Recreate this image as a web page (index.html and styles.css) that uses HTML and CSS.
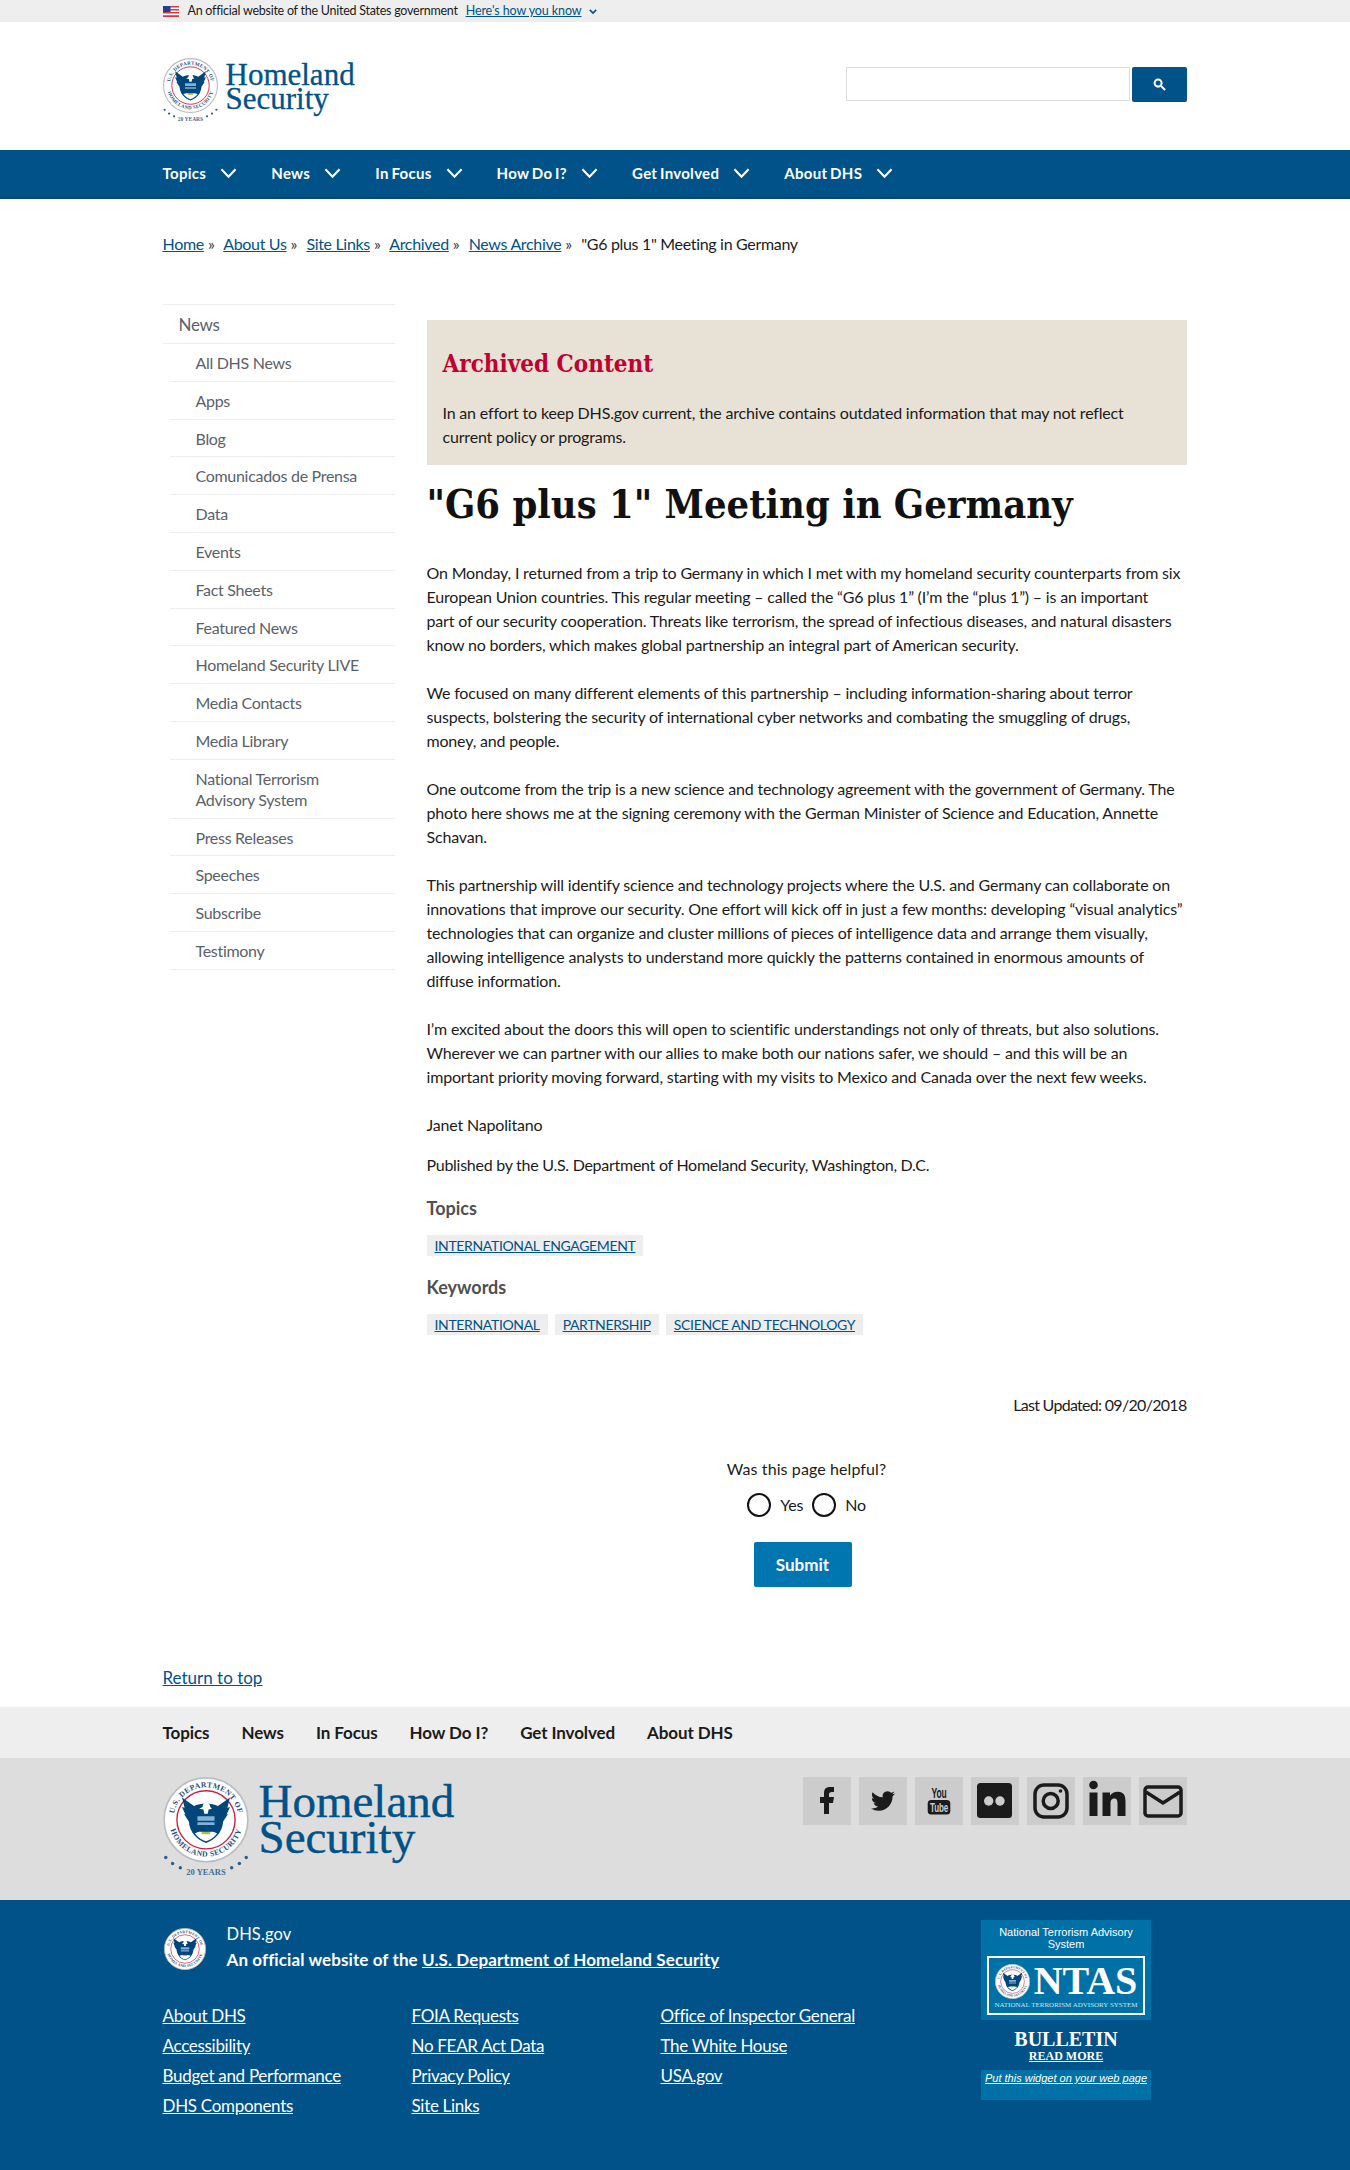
FILE: index.html
```html
<!DOCTYPE html>
<html lang="en">
<head>
<meta charset="UTF-8" />
<meta name="viewport" content="width=device-width, initial-scale=1" />
<title>"G6 plus 1" Meeting in Germany | Homeland Security</title>
<link rel="stylesheet" href="styles.css">
</head>
<body>

<!-- Shared drawings -->
<svg class="defs" width="0" height="0" aria-hidden="true">
  <defs>
    <path id="ring-top" d="M12 50a38 38 0 0 1 76 0" />
    <path id="ring-bottom" d="M7 50a43 43 0 0 0 86 0" />
    <g id="seal-art">
      <circle cx="50" cy="50" r="49" fill="#fff" stroke="#b9bcc2" stroke-width="2" />
      <circle cx="50" cy="50" r="34" fill="#fff" stroke="#c8203f" stroke-width="1.6" />
      <text class="seal-text"><textPath href="#ring-top" startOffset="50%" text-anchor="middle">U.S. DEPARTMENT OF</textPath></text>
      <text class="seal-text"><textPath href="#ring-bottom" startOffset="50%" text-anchor="middle">HOMELAND SECURITY</textPath></text>
      <path fill="#00467a" d="M36 34c7-4 21-4 28 0l14-10-3 12 3-1-4 9 2-1-6 9c-1 13-9 21-20 25-11-4-19-12-20-25l-6-9 2 1-4-9 3 1-3-12z" />
      <path fill="#fff" d="M50 30c3 0 5 2 5 5l2 2-4 1-1 5h-4l-1-5-5-1 4-2c0-3 1-5 4-5z" />
      <path fill="#7fb2d6" d="M40 46h20v5H40zM40 53h20v3H40z" />
      <path fill="#fff" d="M37 66c4-3 9-2 13-1 4-1 9-2 13 1-4 5-9 8-13 9-4-1-9-4-13-9z" />
      <path fill="#a9c23f" d="M45 64h10v3H45z" />
    </g>
    <symbol id="seal" viewBox="0 0 100 100">
      <use href="#seal-art" />
    </symbol>
    <symbol id="seal-years" viewBox="0 0 100 118">
      <use href="#seal-art" />
      <g fill="#2b5f8a">
        <circle cx="3" cy="94" r="2" /><circle cx="11" cy="101" r="2" /><circle cx="20" cy="106" r="2" />
        <circle cx="97" cy="94" r="2" /><circle cx="89" cy="101" r="2" /><circle cx="80" cy="106" r="2" />
      </g>
      <text class="seal-years" x="50" y="114" text-anchor="middle">20 YEARS</text>
    </symbol>
  </defs>
</svg>

<div class="gov-banner">
  <div class="wrap gov-inner">
    <svg class="flag" viewBox="0 0 16 11" width="16" height="11" aria-hidden="true">
      <rect width="16" height="11" fill="#fff" />
      <path fill="#d5374a" d="M0 0h16v1.5H0zM0 3h16v1.5H0zM0 6h16v1.5H0zM0 9.2h16V11H0z" />
      <rect width="7.5" height="6" fill="#2b3b8f" />
    </svg>
    <span>An official website of the United States government</span>
    <a href="#">Here's how you know</a>
    <svg class="mini-chev" viewBox="0 0 10 6" width="8" height="5" aria-hidden="true"><path d="M1 1l4 4 4-4" /></svg>
  </div>
</div>

<header class="site-head">
  <div class="wrap head-inner">
    <a class="logo" href="#">
      <svg class="logo-seal" viewBox="0 0 100 118" aria-hidden="true"><use href="#seal-years" /></svg>
      <span class="logo-word">Homeland<br>Security</span>
    </a>
    <form class="search">
      <input type="text" aria-label="Search" />
      <button type="button" aria-label="Search">
        <svg viewBox="0 0 14 14" width="13" height="13"><circle cx="5.5" cy="5.5" r="3.8" /><path d="M8.5 8.5L13 13" /></svg>
      </button>
    </form>
  </div>
</header>

<nav class="main-nav">
  <ul class="wrap nav-list">
    <li>Topics<svg viewBox="0 0 18 12"><path d="M1.5 2L9 10l7.5-8" /></svg></li>
    <li>News<svg viewBox="0 0 18 12"><path d="M1.5 2L9 10l7.5-8" /></svg></li>
    <li>In Focus<svg viewBox="0 0 18 12"><path d="M1.5 2L9 10l7.5-8" /></svg></li>
    <li>How Do I?<svg viewBox="0 0 18 12"><path d="M1.5 2L9 10l7.5-8" /></svg></li>
    <li>Get Involved<svg viewBox="0 0 18 12"><path d="M1.5 2L9 10l7.5-8" /></svg></li>
    <li>About DHS<svg viewBox="0 0 18 12"><path d="M1.5 2L9 10l7.5-8" /></svg></li>
  </ul>
</nav>

<div class="wrap crumbs">
  <a href="#">Home</a><span class="sep">»</span>
  <a href="#">About Us</a><span class="sep">»</span>
  <a href="#">Site Links</a><span class="sep">»</span>
  <a href="#">Archived</a><span class="sep">»</span>
  <a href="#">News Archive</a><span class="sep">»</span>
  <span class="crumb-here">"G6 plus 1" Meeting in Germany</span>
</div>

<div class="wrap page">
  <aside>
    <ul class="side-nav">
      <li class="side-top">News</li>
      <li>All DHS News</li>
      <li>Apps</li>
      <li>Blog</li>
      <li>Comunicados de Prensa</li>
      <li>Data</li>
      <li>Events</li>
      <li>Fact Sheets</li>
      <li>Featured News</li>
      <li>Homeland Security LIVE</li>
      <li>Media Contacts</li>
      <li>Media Library</li>
      <li>National Terrorism<br>Advisory System</li>
      <li>Press Releases</li>
      <li>Speeches</li>
      <li>Subscribe</li>
      <li>Testimony</li>
    </ul>
  </aside>

  <main>
    <section class="archived">
      <h2>Archived Content</h2>
      <p>In an effort to keep DHS.gov current, the archive contains outdated information that may not reflect<br>current policy or programs.</p>
    </section>

    <h1>"G6 plus 1" Meeting in Germany</h1>

    <div class="article">
      <p>On Monday, I returned from a trip to Germany in which I met with my homeland security counterparts from six<br>European Union countries. This regular meeting – called the “G6 plus 1” (I’m the “plus 1”) – is an important<br>part of our security cooperation. Threats like terrorism, the spread of infectious diseases, and natural disasters<br>know no borders, which makes global partnership an integral part of American security.</p>
      <p>We focused on many different elements of this partnership – including information-sharing about terror<br>suspects, bolstering the security of international cyber networks and combating the smuggling of drugs,<br>money, and people.</p>
      <p>One outcome from the trip is a new science and technology agreement with the government of Germany. The<br>photo here shows me at the signing ceremony with the German Minister of Science and Education, Annette<br>Schavan.</p>
      <p>This partnership will identify science and technology projects where the U.S. and Germany can collaborate on<br>innovations that improve our security. One effort will kick off in just a few months: developing “visual analytics”<br>technologies that can organize and cluster millions of pieces of intelligence data and arrange them visually,<br>allowing intelligence analysts to understand more quickly the patterns contained in enormous amounts of<br>diffuse information.</p>
      <p>I’m excited about the doors this will open to scientific understandings not only of threats, but also solutions.<br>Wherever we can partner with our allies to make both our nations safer, we should – and this will be an<br>important priority moving forward, starting with my visits to Mexico and Canada over the next few weeks.</p>
      <p>Janet Napolitano</p>
    </div>

    <p class="published">Published by the U.S. Department of Homeland Security, Washington, D.C.</p>

    <h3 class="tag-head">Topics</h3>
    <div class="tags"><a href="#">INTERNATIONAL ENGAGEMENT</a></div>
    <h3 class="tag-head">Keywords</h3>
    <div class="tags">
      <a href="#">INTERNATIONAL</a>
      <a href="#">PARTNERSHIP</a>
      <a href="#">SCIENCE AND TECHNOLOGY</a>
    </div>

    <p class="updated">Last Updated: 09/20/2018</p>

    <form class="helpful">
      <p>Was this page helpful?</p>
      <div class="radios">
        <input type="radio" name="helpful" id="yes" /><label for="yes">Yes</label>
        <input type="radio" name="helpful" id="no" /><label for="no">No</label>
      </div>
      <button type="button">Submit</button>
    </form>
  </main>
</div>

<div class="wrap to-top"><a href="#">Return to top</a></div>

<div class="foot-nav">
  <ul class="wrap">
    <li>Topics</li>
    <li>News</li>
    <li>In Focus</li>
    <li>How Do I?</li>
    <li>Get Involved</li>
    <li>About DHS</li>
  </ul>
</div>

<div class="foot-mid">
  <div class="wrap foot-mid-inner">
    <a class="logo logo-big" href="#">
      <svg class="logo-seal" viewBox="0 0 100 118" aria-hidden="true"><use href="#seal-years" /></svg>
      <span class="logo-word">Homeland<br>Security</span>
    </a>
    <div class="social">
      <a href="#" aria-label="Facebook"><svg viewBox="0 0 48 48"><path d="M21 37V26h-4v-6h4v-4c0-4 2-6 6-6h4v5h-2c-2 0-3 1-3 2v3h5l-1 6h-4v11z" /></svg></a>
      <a href="#" aria-label="Twitter"><svg viewBox="-12 -12 48 48"><path d="M23.953 4.57a10 10 0 01-2.825.775 4.958 4.958 0 002.163-2.723c-.951.555-2.005.959-3.127 1.184a4.92 4.92 0 00-8.384 4.482C7.69 8.095 4.067 6.13 1.64 3.162a4.822 4.822 0 00-.666 2.475c0 1.71.87 3.213 2.188 4.096a4.904 4.904 0 01-2.228-.616v.06a4.923 4.923 0 003.946 4.827 4.996 4.996 0 01-2.212.085 4.936 4.936 0 004.604 3.417 9.867 9.867 0 01-6.102 2.105c-.39 0-.779-.023-1.17-.067a13.995 13.995 0 007.557 2.209c9.053 0 13.998-7.496 13.998-13.985 0-.21 0-.42-.015-.63A9.935 9.935 0 0024 4.59z" /></svg></a>
      <a href="#" aria-label="YouTube"><svg viewBox="0 0 48 48">
        <text class="yt-you" x="24" y="21" text-anchor="middle" textLength="15" lengthAdjust="spacingAndGlyphs">You</text>
        <rect x="12.700" y="23" width="22.600" height="14.500" rx="3.500" />
        <text class="yt-tube" x="24" y="34.500" text-anchor="middle" textLength="18" lengthAdjust="spacingAndGlyphs">Tube</text>
      </svg></a>
      <a href="#" aria-label="Flickr"><svg viewBox="0 0 48 48"><rect x="6" y="6" width="35" height="35" rx="3.500" /><circle cx="17.700" cy="24" r="4.700" class="cut" /><circle cx="29" cy="24" r="4.700" class="cut" /></svg></a>
      <a href="#" aria-label="Instagram"><svg viewBox="0 0 48 48" class="line"><rect x="8" y="8" width="32" height="32" rx="9" /><circle cx="23.700" cy="24" r="7.500" /><circle cx="33.500" cy="14" r="1.800" class="dot" /></svg></a>
      <a href="#" aria-label="LinkedIn"><svg viewBox="0 0 48 48"><circle cx="10.500" cy="8" r="4.300" /><rect x="6.500" y="15.500" width="8" height="23.500" /><path d="M19.500 15.500h7.500v3.300c1.500-2.600 4.500-4 7.700-4 6.500 0 7.800 4.300 7.800 10V39h-8V26.500c0-3-.5-5-3-5-3.400 0-4 2.400-4 5.200V39h-8z" /></svg></a>
      <a href="#" aria-label="Email"><svg viewBox="0 0 48 48" class="line"><rect x="6" y="10" width="36" height="29" rx="3" /><path d="M7 15l17 11 17-11" /></svg></a>
    </div>
  </div>
</div>

<footer class="foot-blue">
  <div class="wrap foot-blue-inner">
    <div class="foot-left">
      <div class="identity">
        <svg class="id-seal" viewBox="0 0 100 100" aria-hidden="true"><use href="#seal" /></svg>
        <div>
          <div class="id-name">DHS.gov</div>
          <div class="id-line">An official website of the <a href="#">U.S. Department of Homeland Security</a></div>
        </div>
      </div>
      <div class="foot-links">
        <ul>
          <li><a href="#">About DHS</a></li>
          <li><a href="#">Accessibility</a></li>
          <li><a href="#">Budget and Performance</a></li>
          <li><a href="#">DHS Components</a></li>
        </ul>
        <ul>
          <li><a href="#">FOIA Requests</a></li>
          <li><a href="#">No FEAR Act Data</a></li>
          <li><a href="#">Privacy Policy</a></li>
          <li><a href="#">Site Links</a></li>
        </ul>
        <ul>
          <li><a href="#">Office of Inspector General</a></li>
          <li><a href="#">The White House</a></li>
          <li><a href="#">USA.gov</a></li>
        </ul>
      </div>
    </div>

    <div class="ntas">
      <div class="ntas-top">
        <div class="ntas-title">National Terrorism Advisory<br>System</div>
        <div class="ntas-box">
          <div class="ntas-row">
            <svg viewBox="0 0 100 100" aria-hidden="true"><use href="#seal" /></svg>
            <span>NTAS</span>
          </div>
          <div class="ntas-sub">NATIONAL TERRORISM ADVISORY SYSTEM</div>
        </div>
      </div>
      <div class="ntas-bulletin">BULLETIN</div>
      <a class="ntas-more" href="#">READ MORE</a>
      <div class="ntas-widget"><a href="#">Put this widget on your web page</a></div>
    </div>
  </div>
</footer>

</body>
</html>
```

FILE: styles.css
```css
* { box-sizing: border-box; }
html, body { margin: 0; padding: 0; }
body {
  display: flex;
  flex-direction: column;
  min-height: 100vh;
  font-family: Lato, "Noto Sans", sans-serif;
  font-size: 16px;
  line-height: 24px;
  letter-spacing: -.22px;
  color: #1b1b1b;
  background: #fff;
}
a { color: #005288; }
ul { list-style: none; margin: 0; padding: 0; }
.defs { position: absolute; }
.wrap { width: 1024.500px; margin-left: 162.500px; }

.seal-text {
  font-family: "Liberation Serif", serif;
  font-size: 9px;
  font-weight: bold;
  letter-spacing: .5px;
  fill: #1f4f7c;
}
.seal-years {
  font-family: "Liberation Serif", serif;
  font-size: 10px;
  font-weight: bold;
  letter-spacing: 0;
  fill: #3f7098;
}

/* Gov banner */
.gov-banner {
  height: 22px;
  background: #eee;
  font-size: 12.500px;
  line-height: 22px;
  letter-spacing: -.25px;
}
.gov-inner { display: flex; align-items: center; }
.flag { margin-right: 9px; }
.gov-inner a { margin-left: 8px; letter-spacing: -.1px; }
.mini-chev { margin-left: 7px; fill: none; stroke: #005288; stroke-width: 2; }

/* Header */
.site-head { height: 128px; }
.head-inner {
  display: flex;
  justify-content: space-between;
  height: 100%;
  padding-top: 36px;
}
.logo {
  display: flex;
  align-items: flex-start;
  text-decoration: none;
}
.logo-seal { width: 55px; height: 65px; }
.logo-word {
  font-family: "Liberation Serif", serif;
  font-size: 31px;
  line-height: 24px;
  letter-spacing: 0;
  color: #005288;
  margin-left: 8px;
  padding-top: 5px;
  -webkit-text-stroke: .3px #005288;
}
.search { display: flex; gap: 2px; padding-top: 9px; }
.search input {
  width: 284px;
  height: 34px;
  border: 1px solid #ddd;
  background: #fff;
  padding: 0;
}
.search button {
  width: 55px;
  height: 35px;
  border: 0;
  border-radius: 2px;
  background: #005288;
  display: flex;
  align-items: center;
  justify-content: center;
}
.search svg { fill: none; stroke: #fff; stroke-width: 2.200; }

/* Main nav */
.main-nav {
  height: 49px;
  background: #005288;
  border-bottom: 2px solid #00446f;
}
.nav-list {
  display: flex;
  align-items: center;
  height: 45px;
  color: #fff;
  font-weight: bold;
  font-size: 15px;
  letter-spacing: .3px;
  word-spacing: -1.200px;
}
.nav-list li { display: flex; align-items: center; margin-right: 34px; }
.nav-list svg {
  width: 17px;
  height: 12px;
  margin-left: 14px;
  fill: none;
  stroke: #fff;
  stroke-width: 2.200;
}

/* Breadcrumb */
.crumbs { padding-top: 33px; height: 105px; white-space: nowrap; letter-spacing: -.32px; }
.sep { margin-left: 4px; margin-right: 5.500px; color: #333; }
.crumb-here { margin-left: 0; }

/* Layout */
.page {
  display: grid;
  grid-template-columns: 232px 760px;
  column-gap: 32px;
}

/* Side nav */
.side-nav { border-top: 1px solid #eee; color: #5b616b; letter-spacing: -.3px; }
.side-nav li {
  padding: 8px 0 7.800px 26px;
  border-bottom: 1px solid #eee;
  line-height: 21px;
  margin-left: 7px;
}
.side-nav .side-top {
  padding: 8.500px 0 8.500px 16px;
  margin-left: 0;
  font-size: 17px;
}

/* Archived box */
main { padding-top: 16px; }
.archived {
  height: 145px;
  background: #e7e1d6;
  padding: 28px 16px 0;
}
.archived h2 {
  font-family: "DejaVu Serif", serif;
  font-stretch: condensed;
  font-size: 24px;
  line-height: 32px;
  letter-spacing: 0;
  margin: 0 0 21px;
  color: #c1002f;
}
.archived p { margin: 0; letter-spacing: -.18px; }

h1 {
  font-family: "DejaVu Serif", serif;
  font-stretch: condensed;
  font-size: 39.500px;
  line-height: 50px;
  letter-spacing: 0;
  margin: 14px 0 32px;
  color: #111;
}

.article p { margin: 0 0 24px; letter-spacing: -.18px; }
.published { margin: -8px 0 0; letter-spacing: -.27px; }
.tag-head {
  font-size: 18px;
  line-height: 24px;
  letter-spacing: 0;
  color: #505050;
  margin: 19px 0 15px;
}
.tags { display: flex; gap: 7px; height: 21px; line-height: 21px; }
.tags a {
  background: #eee;
  padding: 0 8px;
  font-size: 14px;
  letter-spacing: -.35px;
}
.updated { margin: 58px 0 0; text-align: right; letter-spacing: -.7px; }

/* Helpful form */
.helpful {
  display: flex;
  flex-direction: column;
  align-items: center;
  margin-top: 40px;
}
.helpful p { margin: 0; letter-spacing: .1px; }
.radios { display: flex; align-items: center; margin-top: 12px; height: 24px; }
.radios input {
  appearance: none;
  width: 24px;
  height: 24px;
  margin: 0 9px 0 0;
  border: 2px solid #111;
  border-radius: 50%;
  background: #fff;
}
.radios label { margin-right: 9px; }
.radios label:last-child { margin-right: 0; }
.helpful button {
  margin-top: 25px;
  margin-right: 8px;
  width: 98px;
  height: 45px;
  border: 0;
  border-radius: 2px;
  background: #0076b0;
  color: #fff;
  font-family: inherit;
  font-size: 17px;
  font-weight: bold;
}

.to-top { margin-top: 79px; height: 41px; font-size: 17px; letter-spacing: 0; }

/* Footer */
.foot-nav { height: 51px; background: #eee; }
.foot-nav ul {
  display: flex;
  align-items: center;
  gap: 32px;
  height: 100%;
  font-size: 17px;
  font-weight: bold;
  letter-spacing: -.1px;
}
.foot-mid { height: 142px; background: #ddd; }
.foot-mid-inner {
  display: flex;
  justify-content: space-between;
  padding-top: 19px;
}
.logo-big .logo-seal { width: 86px; height: 101px; }
.logo-big .logo-word {
  font-size: 47px;
  line-height: 36px;
  margin-left: 10px;
  padding-top: 6px;
  -webkit-text-stroke: .4px #005288;
}
.social { display: flex; gap: 8px; }
.social a {
  display: block;
  width: 48px;
  height: 48px;
  background: #ccc;
}
.social svg { display: block; width: 48px; height: 48px; fill: #1b1b1b; }
.social .cut { fill: #ccc; }
.social .line { fill: none; stroke: #1b1b1b; stroke-width: 3.500; }
.social .line .dot { fill: #1b1b1b; stroke: none; }
.yt-you { font-family: "Liberation Sans", sans-serif; font-size: 14px; font-weight: bold; fill: #1b1b1b; }
.yt-tube { font-family: "Liberation Sans", sans-serif; font-size: 12px; font-weight: bold; fill: #ccc; }

.foot-blue {
  flex: 1;
  background: #005288;
  color: #fff;
}
.foot-blue a { color: #fff; }
.foot-blue-inner { display: flex; justify-content: space-between; }
.foot-left { padding-top: 21px; }
.identity { display: flex; align-items: center; }
.id-seal { width: 42px; height: 42px; margin: 3px 21px 0 1px; }
.id-name { line-height: 26px; font-size: 16.500px; letter-spacing: .1px; }
.id-line { font-weight: bold; line-height: 26px; font-size: 17px; letter-spacing: .1px; }
.foot-links { display: flex; margin-top: 28px; font-size: 17px; line-height: 30px; letter-spacing: -.3px; }
.foot-links ul { width: 249px; }

/* NTAS widget */
.ntas {
  width: 170px;
  margin-top: 20px;
  margin-right: 36px;
  text-align: center;
  letter-spacing: 0;
}
.ntas-top {
  height: 100px;
  background: #0071a6;
  padding: 6px 6px 0;
}
.ntas-title {
  font-family: "Liberation Sans", sans-serif;
  font-size: 11px;
  line-height: 12px;
}
.ntas-box {
  margin-top: 6px;
  height: 59px;
  border: 2px solid #fff;
  padding: 6px 4px 0;
}
.ntas-row {
  display: flex;
  align-items: center;
  justify-content: center;
  gap: 4px;
  height: 34px;
}
.ntas-row svg { width: 35px; height: 35px; }
.ntas-row span {
  font-family: "Liberation Serif", serif;
  font-size: 40px;
  line-height: 34px;
  font-weight: bold;
}
.ntas-sub {
  font-family: "Liberation Serif", serif;
  font-size: 7px;
  line-height: 10px;
  white-space: nowrap;
  margin-top: 2px;
  color: #cfe3ef;
}
.ntas-bulletin {
  font-family: "Liberation Serif", serif;
  font-weight: bold;
  font-size: 20px;
  line-height: 20px;
  margin-top: 9px;
}
.ntas-more {
  display: block;
  font-family: "Liberation Serif", serif;
  font-weight: bold;
  font-size: 12px;
  line-height: 14px;
}
.ntas-widget {
  margin-top: 7px;
  height: 30px;
  background: #0071a6;
  font-family: "Liberation Sans", sans-serif;
  font-style: italic;
  font-size: 11px;
  line-height: 17px;
}
```
